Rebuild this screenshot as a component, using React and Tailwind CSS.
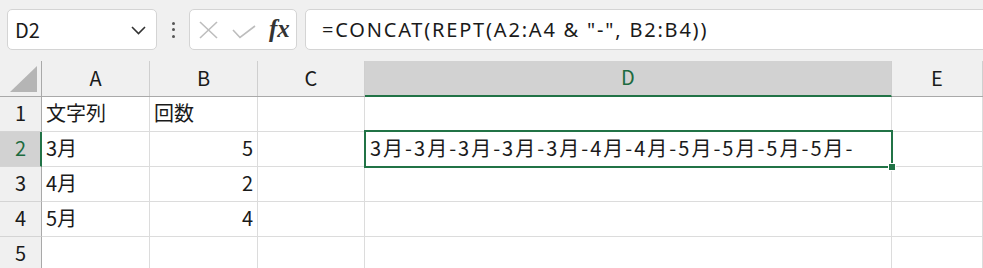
import React from "react";

const cols = [
  { key: "A", w: "w-[108px]" },
  { key: "B", w: "w-[108px]" },
  { key: "C", w: "w-[107px]" },
  { key: "D", w: "w-[527px]" },
  { key: "E", w: "flex-1" },
];

const rows = [
  { n: 1, A: "文字列", B: "回数" },
  { n: 2, A: "3月", B: "5", D: "3月-3月-3月-3月-3月-4月-4月-5月-5月-5月-5月-" },
  { n: 3, A: "4月", B: "2" },
  { n: 4, A: "5月", B: "4" },
  { n: 5 },
];

export default function App() {
  return (
    <div
      className="w-[983px] h-[268px] overflow-hidden bg-white text-[#1a1a1a]"
      style={{ fontFamily: '"Noto Sans CJK JP", "Noto Sans", sans-serif' }}
    >
      {/* Formula bar */}
      <div className="h-[61px] bg-[#f0f0f0] flex items-start pt-[9px] pl-[7px]">
        <div className="w-[150px] h-[41px] bg-white border border-[#d4d4d4] rounded-[5px] flex items-center pl-[7px] pr-[10px]">
          <span className="text-[20px] leading-none flex-1">D2</span>
          <svg width="15" height="9" viewBox="0 0 15 9" className="mt-[2px]">
            <polyline points="1,1 7.5,7.5 14,1" fill="none" stroke="#333" strokeWidth="1.6" />
          </svg>
        </div>
        <div className="w-[32px] h-[41px] flex flex-col items-center justify-center gap-[3.5px]">
          <span className="w-[3px] h-[3px] rounded-full bg-[#555]" />
          <span className="w-[3px] h-[3px] rounded-full bg-[#555]" />
          <span className="w-[3px] h-[3px] rounded-full bg-[#555]" />
        </div>
        <div className="w-[108px] h-[41px] bg-white border border-[#d4d4d4] rounded-[5px] flex items-center pl-[9px]">
          <svg width="19" height="18" viewBox="0 0 19 18">
            <line x1="1" y1="1" x2="18" y2="17" stroke="#bdbdbd" strokeWidth="1.6" />
            <line x1="18" y1="1" x2="1" y2="17" stroke="#bdbdbd" strokeWidth="1.6" />
          </svg>
          <svg width="24" height="14" viewBox="0 0 24 14" className="ml-[14px] mt-[4px]">
            <polyline points="1,5 8,12.5 23,1" fill="none" stroke="#bdbdbd" strokeWidth="1.6" />
          </svg>
          <span
            className="ml-[13px] text-[25px] italic font-semibold leading-none text-[#333] mt-[-2px]"
            style={{ fontFamily: '"Liberation Serif", "DejaVu Serif", serif' }}
          >
            fx
          </span>
        </div>
        <div className="flex-1 h-[41px] ml-[8px] mr-[-8px] bg-white border border-[#d4d4d4] rounded-[5px] flex items-center pl-[16px]">
          <span
            className="text-[20px] leading-none tracking-[1.8px]"
            style={{ fontFamily: '"Noto Sans", "Noto Sans CJK JP", sans-serif' }}
          >
            =CONCAT(REPT(A2:A4 &amp; "-", B2:B4))
          </span>
        </div>
      </div>

      {/* Column headers */}
      <div className="flex h-[36px] bg-[#f0f0f0] border-b border-[#a9a9a9]">
        <div className="w-[42px] h-full border-r border-[#a9a9a9] relative">
          <svg width="30" height="28" viewBox="0 0 30 28" className="absolute left-[9px] top-[4px]">
            <polygon points="1,27 28,1 28,27" fill="#b5b5b5" />
          </svg>
        </div>
        {cols.map((c) =>
          c.key === "D" ? (
            <div
              key={c.key}
              className={`${c.w} h-[36px] border-r border-[#cfcfcf] bg-[#d2d2d2] border-b-2 border-b-[#217346] mb-[-1px] flex items-center justify-center text-[20px] text-[#1d6b3f] pb-[2px]`}
            >
              {c.key}
            </div>
          ) : (
            <div
              key={c.key}
              className={`${c.w} h-full border-r border-[#cfcfcf] flex items-center justify-center text-[20px] pb-[2px]`}
            >
              {c.key}
            </div>
          )
        )}
      </div>

      {/* Rows */}
      {rows.map((r) => (
        <div key={r.n} className="flex h-[35px]">
          <div
            className={
              r.n === 2
                ? "w-[42px] h-full bg-[#d2d2d2] border-r-2 border-r-[#217346] border-b border-b-[#d4d4d4] flex items-center justify-center pl-[1px] text-[20px] text-[#1d6b3f] pb-[3px]"
                : "w-[42px] h-full bg-[#f0f0f0] border-r border-r-[#a9a9a9] border-b border-b-[#d4d4d4] flex items-center justify-center text-[20px] pb-[3px]"
            }
          >
            {r.n}
          </div>
          {cols.map((c) => (
            <div
              key={c.key}
              className={`${c.w} h-full border-r border-b border-[#dcdcdc] flex items-center text-[20px] whitespace-nowrap pb-[3px] relative ${
                c.key === "B" && r.n > 1 ? "justify-end pr-[4px]" : "pl-[4px]"
              }`}
            >
              {c.key === "D" && r.D ? (
                <span className="tracking-[2px] pl-[1px]">{r.D}</span>
              ) : (
                r[c.key] || ""
              )}
              {c.key === "D" && r.n === 2 && (
                <div className="absolute left-[-1px] top-[-2px] right-[-2px] bottom-[-2px] border-2 border-[#217346] z-10">
                  <div className="absolute right-[-5px] bottom-[-5px] w-[8px] h-[8px] bg-[#217346] border border-white" />
                </div>
              )}
            </div>
          ))}
        </div>
      ))}
    </div>
  );
}
